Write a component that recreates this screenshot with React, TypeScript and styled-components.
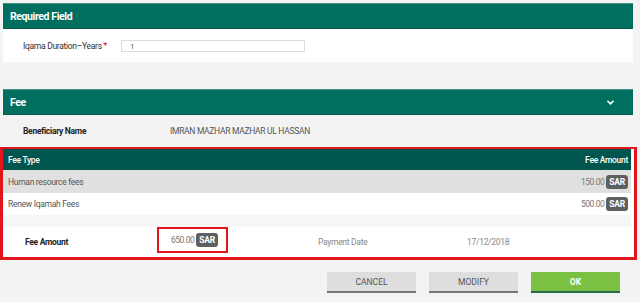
import styled, { createGlobalStyle } from "styled-components";

const GlobalStyle = createGlobalStyle`
  html, body {
    margin: 0;
    padding: 0;
    background: #f3f3f3;
  }
  body {
    font-family: "Roboto", "Liberation Sans", sans-serif;
    font-size: 8.5px;
    letter-spacing: -0.3px;
    color: #333;
  }
`;

const fees = [
  { type: "Human resource fees", amount: "150.00" },
  { type: "Renew Iqamah Fees", amount: "500.00" },
];

const App = (): JSX.Element => {
  return (
    <>
      <GlobalStyle />
      <Page>
        <Panel>
          <PanelHeader>Required Field</PanelHeader>
          <PanelBody>
            <Label>
              Iqama Duration–Years <Star>*</Star>
            </Label>
            <TextInput defaultValue="1" />
          </PanelBody>
        </Panel>

        <Panel>
          <PanelHeader>
            Fee
            <Chevron viewBox="0 0 10 8">
              <path d="M1.5 2 L5 5.5 L8.5 2" fill="none" stroke="#fff" strokeWidth="2" />
            </Chevron>
          </PanelHeader>
          <InfoRow>
            <BoldLabel>Beneficiary Name</BoldLabel>
            <Value>IMRAN MAZHAR MAZHAR UL HASSAN</Value>
          </InfoRow>
        </Panel>

        <Highlight>
          <Table>
            <TableHead>
              <span>Fee Type</span>
              <span>Fee Amount</span>
            </TableHead>
            {fees.map((f, i) => (
              <TableRow key={f.type} $striped={i % 2 === 0}>
                <span>{f.type}</span>
                <Money>
                  {f.amount}
                  <Badge>SAR</Badge>
                </Money>
              </TableRow>
            ))}
          </Table>
          <Spacer />
          <SummaryRow>
            <SummaryLabel>Fee Amount</SummaryLabel>
            <TotalBox>
              <Money>
                650.00
                <Badge>SAR</Badge>
              </Money>
            </TotalBox>
            <MutedText>Payment Date</MutedText>
            <MutedText>17/12/2018</MutedText>
          </SummaryRow>
        </Highlight>

        <Actions>
          <Button>CANCEL</Button>
          <Button>MODIFY</Button>
          <Button $primary>OK</Button>
        </Actions>
      </Page>
    </>
  );
};

export default App;

const Page = styled.div`
  width: 640px;
  height: 302px;
  padding: 3px 0 0 0;
  box-sizing: border-box;
  display: flex;
  flex-direction: column;
`;

const Panel = styled.section`
  margin: 0 7px 0 3px;
  & + & {
    margin-top: 27px;
  }
`;

const PanelHeader = styled.div`
  height: 26px;
  box-sizing: border-box;
  background: #006f5f;
  border-top: 1px solid #3f9385;
  border-bottom: 1px solid #0b584e;
  color: #fff;
  font-weight: 700;
  font-size: 10.5px;
  letter-spacing: -0.4px;
  padding: 0 0 0 7px;
  display: flex;
  align-items: center;
  justify-content: space-between;
`;

const Chevron = styled.svg`
  width: 9px;
  height: 7px;
  margin-right: 18px;
`;

const PanelBody = styled.div`
  background: #fff;
  height: 33px;
  display: flex;
  align-items: center;
  padding-left: 20px;
`;

const Label = styled.label`
  width: 98px;
  color: #333;
`;

const Star = styled.span`
  color: #d0021b;
`;

const TextInput = styled.input`
  width: 184px;
  height: 12px;
  box-sizing: border-box;
  border: 1px solid #dcdcdc;
  font-family: inherit;
  font-size: 8px;
  color: #666;
  padding: 0 8px;
  margin-top: 1px;
  outline: none;
`;

const InfoRow = styled.div`
  height: 32px;
  display: flex;
  align-items: center;
  padding-left: 20px;
`;

const BoldLabel = styled.span`
  width: 147px;
  font-weight: 700;
  color: #222;
`;

const Value = styled.span`
  color: #555;
`;

const Highlight = styled.div`
  width: 637px;
  box-sizing: border-box;
  border: 3px solid #e2141c;
  border-top-width: 2px;
  padding: 0 3px 0 0;
  background: #fff;
`;

const Table = styled.div`
  display: flex;
  flex-direction: column;
`;

const TableHead = styled.div`
  height: 21px;
  background: #01554f;
  color: #fff;
  font-weight: 500;
  display: flex;
  align-items: center;
  justify-content: space-between;
  padding: 0 3px 0 5px;
`;

const TableRow = styled.div<{ $striped: boolean }>`
  height: ${(p) => (p.$striped ? "23px" : "22px")};
  background: ${(p) => (p.$striped ? "#e0e0e0" : "#fff")};
  color: #555;
  display: flex;
  align-items: center;
  justify-content: space-between;
  padding: 0 3px 0 5px;
`;

const Money = styled.span`
  display: flex;
  align-items: center;
  gap: 2px;
  color: #777;
  letter-spacing: -0.5px;
`;

const Badge = styled.span`
  background: #5f5f5f;
  color: #fff;
  font-weight: 700;
  letter-spacing: -0.2px;
  border-radius: 3px;
  padding: 2px 3px;
  line-height: 10px;
`;

const Spacer = styled.div`
  height: 12px;
  background: #f6f6f6;
`;

const SummaryRow = styled.div`
  height: 30px;
  display: flex;
  align-items: center;
  padding-left: 22px;
`;

const SummaryLabel = styled.span`
  width: 132px;
  font-weight: 700;
  color: #222;
`;

const TotalBox = styled.div`
  width: 71px;
  height: 26px;
  box-sizing: border-box;
  border: 2px solid #e2141c;
  display: flex;
  align-items: center;
  justify-content: flex-end;
  padding-right: 8px;
  margin-right: 90px;
  margin-top: -4px;
`;

const MutedText = styled.span`
  width: 149px;
  color: #888;
`;

const Actions = styled.div`
  display: flex;
  justify-content: flex-end;
  gap: 13px;
  padding: 12px 20px 0 0;
`;

const Button = styled.button<{ $primary?: boolean }>`
  width: 89px;
  height: 21px;
  border: none;
  border-bottom: 2px solid ${(p) => (p.$primary ? "#2b6b4e" : "#777")};
  background: ${(p) => (p.$primary ? "#7ac143" : "#dedede")};
  color: ${(p) => (p.$primary ? "#fff" : "#555")};
  font-family: inherit;
  font-size: 8.5px;
  letter-spacing: 0;
  font-weight: ${(p) => (p.$primary ? 700 : 400)};
  padding: 0;
`;
